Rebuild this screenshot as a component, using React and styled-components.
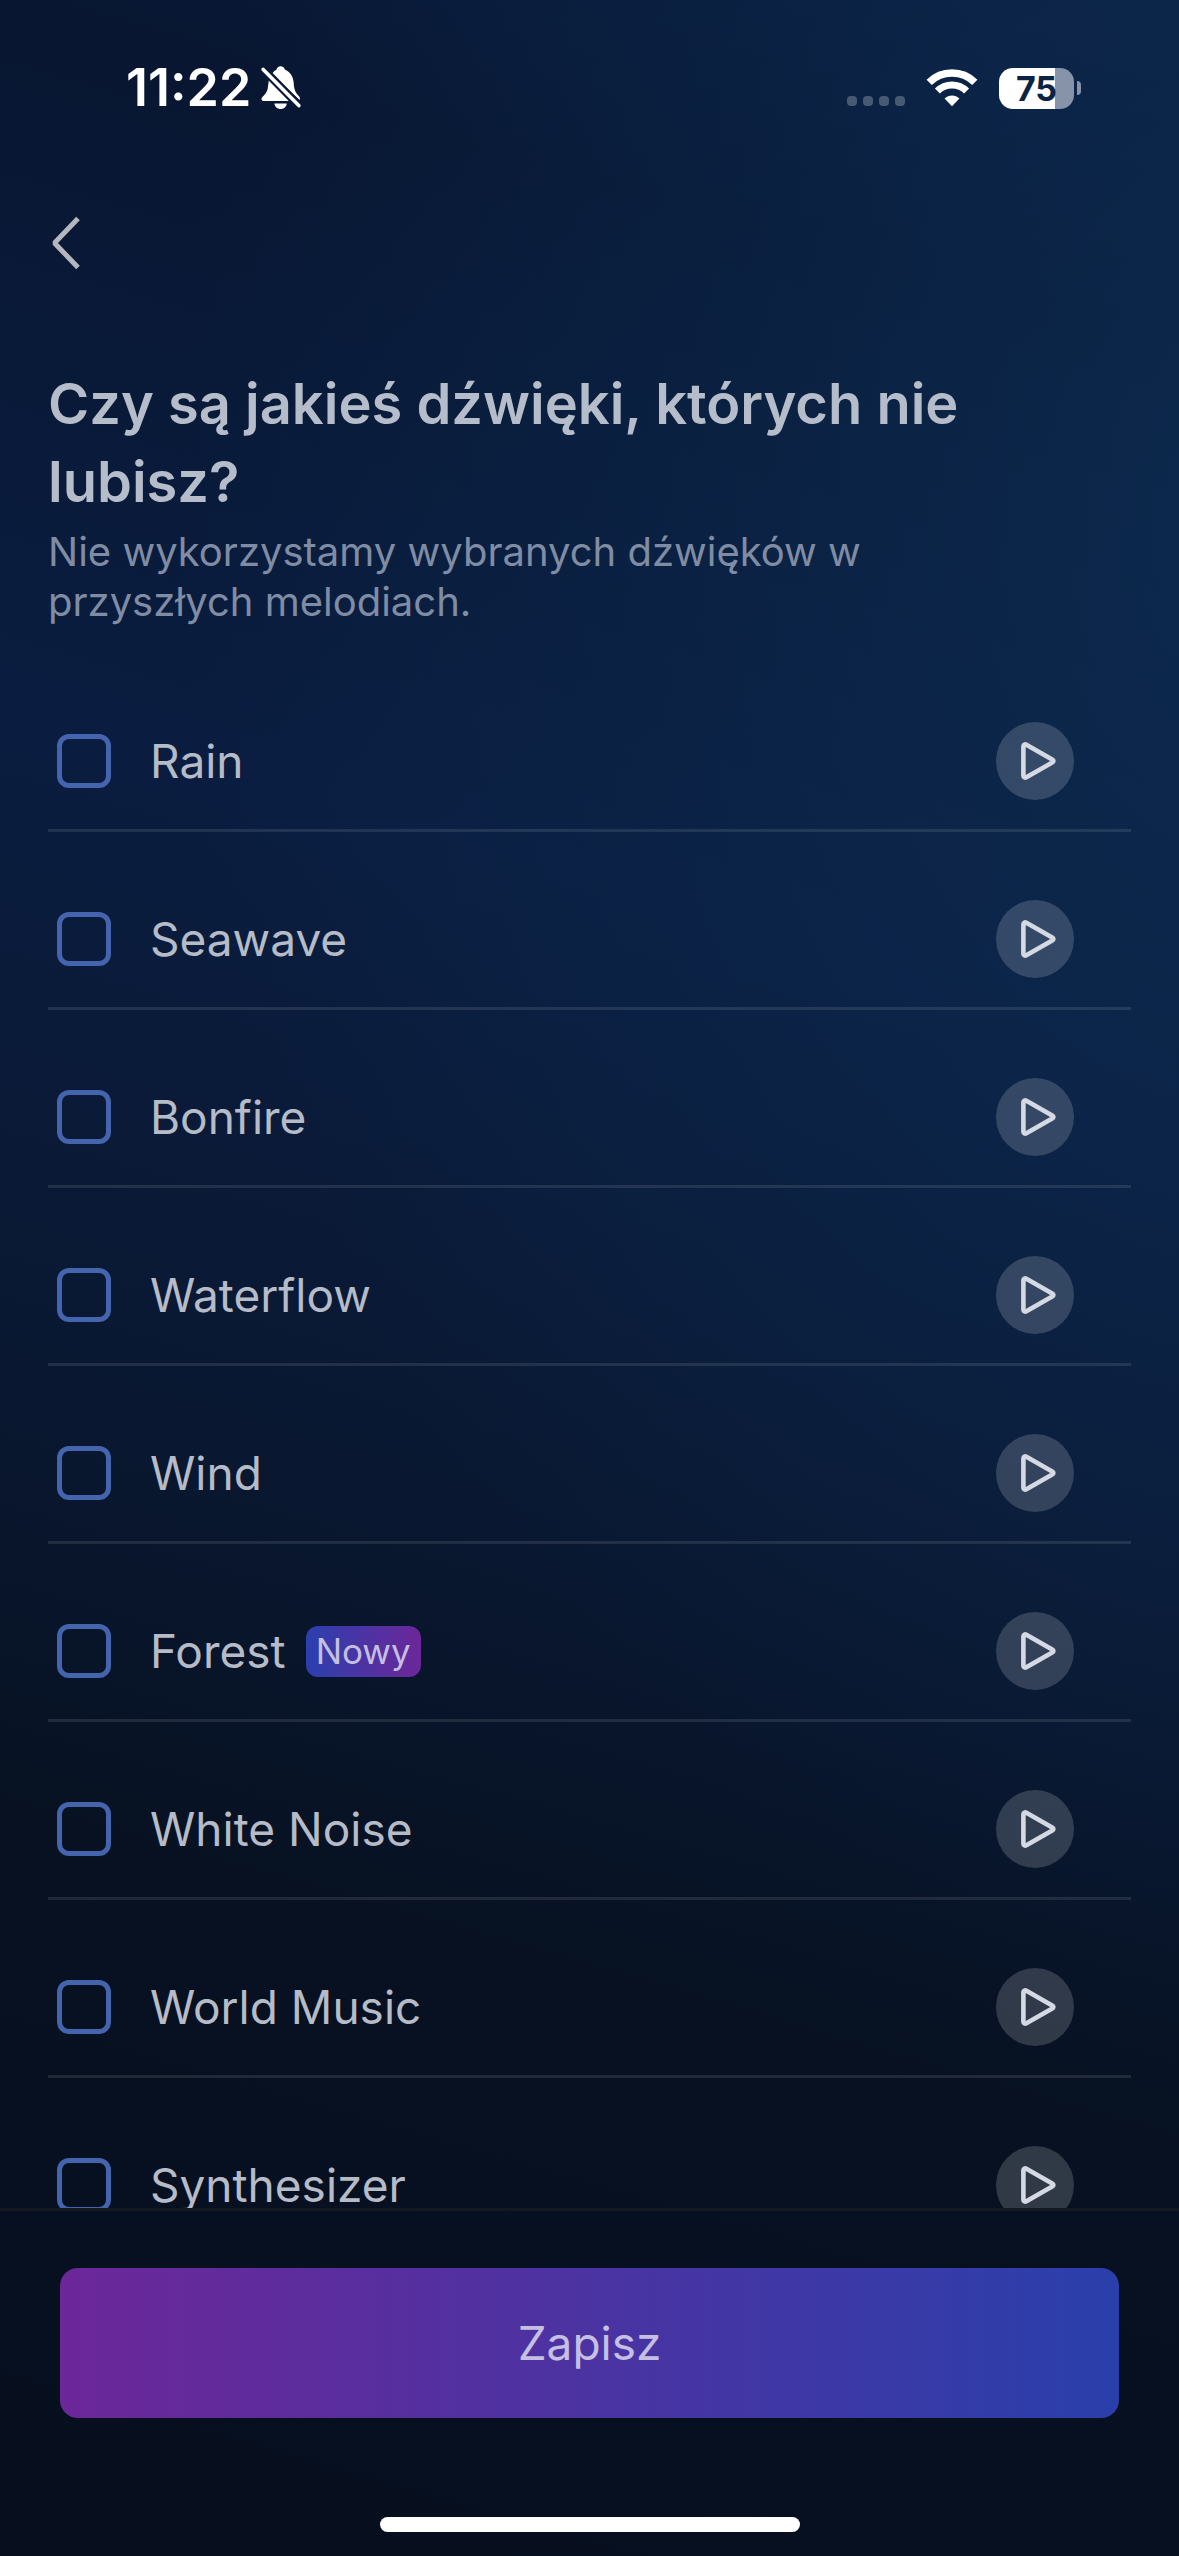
import React, { useState } from 'react';
import styled, { createGlobalStyle } from 'styled-components';

const GlobalStyle = createGlobalStyle`
	* {
		box-sizing: border-box;
	}

	body {
		margin: 0;
		background: #070e1d;
		font-family: Inter, 'Noto Sans', sans-serif;
	}

	button, input {
		font-family: inherit;
	}
`;

const Screen = styled.div`
	display: flex;
	flex-direction: column;
	height: 100vh;
	overflow: hidden;
	background:
		radial-gradient(ellipse 95% 58% at 110% 20%, rgba(13, 45, 83, 0.85), rgba(13, 45, 83, 0) 100%),
		linear-gradient(196deg, #0a1d3f 0%, #081631 12%, #0a1d40 36%, #0a1a37 50%, #091730 60%, #071121 75%, #070f1f 100%);
`;

const StatusBar = styled.header`
	display: flex;
	align-items: center;
	justify-content: space-between;
	height: 176px;
	padding: 0 98px 0 126px;
	color: #fff;
`;

const StatusGroup = styled.div`
	display: flex;
	align-items: center;
	gap: ${props => props.$gap};
`;

const Time = styled.span`
	font-size: 52px;
	font-weight: 600;
	line-height: 60px;
`;

const Dots = styled.div`
	display: flex;
	align-self: flex-end;
	gap: 6px;
	padding-bottom: 3px;
`;

const Dot = styled.span`
	width: 10px;
	height: 10px;
	border-radius: 4px;
	background: rgba(255, 255, 255, 0.25);
`;

const Battery = styled.div`
	display: flex;
	align-items: center;
	gap: 3px;
`;

const BatteryBody = styled.div`
	width: 75px;
	border-radius: 14px;
	background: linear-gradient(to right, #fff ${props => props.$level}%, #8693a8 ${props => props.$level}%);
	color: #0c2344;
	font-size: 34px;
	font-weight: 700;
	line-height: 41px;
	text-align: center;
`;

const BatteryCap = styled.span`
	width: 4px;
	height: 14px;
	border-radius: 0 4px 4px 0;
	background: #8693a8;
`;

const Nav = styled.nav`
	display: flex;
	align-items: center;
	height: 134px;
	padding: 0 48px;
`;

const BackButton = styled.button`
	display: flex;
	padding: 0;
	border: none;
	background: none;
	color: #b4b8be;
	cursor: pointer;
`;

const Intro = styled.section`
	padding: 55px 48px 27px;
`;

const Title = styled.h1`
	margin: 0 0 6px;
	color: #b6bdca;
	font-size: 56px;
	font-weight: 600;
	line-height: 78px;
`;

const Subtitle = styled.p`
	max-width: 900px;
	margin: 0;
	color: #7f8ca3;
	font-size: 40px;
	line-height: 50px;
`;

const SoundList = styled.ul`
	flex: 1;
	min-height: 0;
	margin: 0;
	padding: 0 48px;
	overflow: hidden;
	list-style: none;
`;

const SoundRow = styled.li`
	display: flex;
	align-items: center;
	justify-content: space-between;
	padding: 68px 57px 29px 9px;
	border-bottom: 3px solid rgba(255, 255, 255, 0.1);
`;

const SoundLabel = styled.label`
	display: flex;
	align-items: center;
	color: #b5bbc7;
	font-size: 46px;
	line-height: 58px;
	cursor: pointer;
`;

const Checkbox = styled.input`
	appearance: none;
	width: 54px;
	height: 54px;
	margin: 0 39px 0 0;
	border: 5px solid #4464ad;
	border-radius: 12px;
	cursor: pointer;

	&:checked {
		background: #4464ad;
	}
`;

const Badge = styled.span`
	margin-left: 20px;
	padding: 0 10px;
	border-radius: 12px;
	background: linear-gradient(to right, #2c3fae, #6c2799);
	color: #c4bfe0;
	font-size: 35px;
	line-height: 51px;
`;

const PlayButton = styled.button`
	display: flex;
	align-items: center;
	justify-content: center;
	width: 78px;
	height: 78px;
	padding: 0;
	border: none;
	border-radius: 50%;
	background: rgba(255, 255, 255, 0.17);
	color: #d5d9e3;
	cursor: pointer;
`;

const Footer = styled.footer`
	display: flex;
	flex-direction: column;
	align-items: center;
	padding: 57px 60px 24px;
	border-top: 3px solid #15191f;
`;

const SaveButton = styled.button`
	width: 100%;
	height: 150px;
	border: none;
	border-radius: 18px;
	background: linear-gradient(to right, #6c2799, #2a3fab);
	color: #c5bfe2;
	font-size: 46px;
	cursor: pointer;
`;

const HomeIndicator = styled.div`
	width: 420px;
	height: 15px;
	margin-top: 99px;
	border-radius: 8px;
	background: #fff;
`;

const BellOffIcon = () => (
	<svg width="40" height="44" viewBox="0 0 40 44" fill="currentColor" aria-hidden="true">
		<path d="M8 13.5 L28.5 35 H2.5 C0.3 35 -0.2 32.6 1.4 31 C5 27.3 6.8 25 7 20 Z" />
		<path d="M10.8 8.2 C12 6 13.6 4.6 15.4 3.8 C16 1.6 17.4 0.3 19.6 0.3 C21.8 0.3 23.4 1.6 24 3.8 C29 5.8 32.2 10.4 32.6 16 C33 23.5 34.4 26.6 37.6 29.8 C38.8 31.2 39.4 32.6 38.6 34 Z" />
		<path d="M13.4 37.4 H25.8 C25.4 40.8 22.8 42.9 19.6 42.9 C16.4 42.9 13.8 40.8 13.4 37.4 Z" />
		<path d="M2.4 3.4 L38 39.6" stroke="#0a1936" strokeWidth="8" />
		<path d="M2.2 3.4 L37.8 39.6" stroke="currentColor" strokeWidth="3.6" strokeLinecap="round" />
	</svg>
);

const WifiIcon = () => (
	<svg width="52" height="38" viewBox="0 0 52 38" fill="none" stroke="currentColor" aria-hidden="true">
		<path d="M3.2 13.4 A32.5 32.5 0 0 1 48.8 13.4" strokeWidth="7.4" />
		<path d="M11.4 22 A20.5 20.5 0 0 1 40.6 22" strokeWidth="7" />
		<path d="M26 37.2 L18.6 29.6 C22.6 25.4 29.4 25.4 33.4 29.6 Z" fill="currentColor" stroke="none" />
	</svg>
);

const ChevronIcon = () => (
	<svg width="34" height="56" viewBox="0 0 34 56" fill="none" stroke="currentColor" strokeWidth="5" aria-hidden="true">
		<path d="M30 3.5 L6.5 28 L30 52.5" strokeLinejoin="bevel" />
	</svg>
);

const PlayIcon = () => (
	<svg width="78" height="78" viewBox="0 0 78 78" fill="none" stroke="currentColor" strokeWidth="4.6" strokeLinejoin="round" aria-hidden="true">
		<path d="M27.4 24.2 C27.4 22.4 29 22 30.4 22.8 L56.2 37.4 C57.8 38.4 57.8 39.6 56.2 40.6 L30.4 55.2 C29 56 27.4 55.6 27.4 53.8 Z" />
	</svg>
);

const sounds = [
	{ name: 'Rain' },
	{ name: 'Seawave' },
	{ name: 'Bonfire' },
	{ name: 'Waterflow' },
	{ name: 'Wind' },
	{ name: 'Forest', isNew: true },
	{ name: 'White Noise' },
	{ name: 'World Music' },
	{ name: 'Synthesizer' },
];

const App = () => {
	const [disliked, setDisliked] = useState([]);

	const toggle = (name) => {
		setDisliked(disliked.includes(name) ? disliked.filter(n => n !== name) : [...disliked, name]);
	};

	return (
		<Screen>
			<GlobalStyle />
			<StatusBar>
				<StatusGroup $gap="10px">
					<Time>11:22</Time>
					<BellOffIcon />
				</StatusGroup>
				<StatusGroup $gap="21px">
					<Dots>
						<Dot />
						<Dot />
						<Dot />
						<Dot />
					</Dots>
					<WifiIcon />
					<Battery>
						<BatteryBody $level={75}>75</BatteryBody>
						<BatteryCap />
					</Battery>
				</StatusGroup>
			</StatusBar>
			<Nav>
				<BackButton aria-label="Wstecz">
					<ChevronIcon />
				</BackButton>
			</Nav>
			<Intro>
				<Title>Czy są jakieś dźwięki, których nie lubisz?</Title>
				<Subtitle>Nie wykorzystamy wybranych dźwięków w przyszłych melodiach.</Subtitle>
			</Intro>
			<SoundList>
				{sounds.map(sound => (
					<SoundRow key={sound.name}>
						<SoundLabel>
							<Checkbox
								type="checkbox"
								checked={disliked.includes(sound.name)}
								onChange={() => toggle(sound.name)}
							/>
							{sound.name}
							{sound.isNew && <Badge>Nowy</Badge>}
						</SoundLabel>
						<PlayButton aria-label={`Odtwórz ${sound.name}`}>
							<PlayIcon />
						</PlayButton>
					</SoundRow>
				))}
			</SoundList>
			<Footer>
				<SaveButton>Zapisz</SaveButton>
				<HomeIndicator />
			</Footer>
		</Screen>
	);
};

export default App;
